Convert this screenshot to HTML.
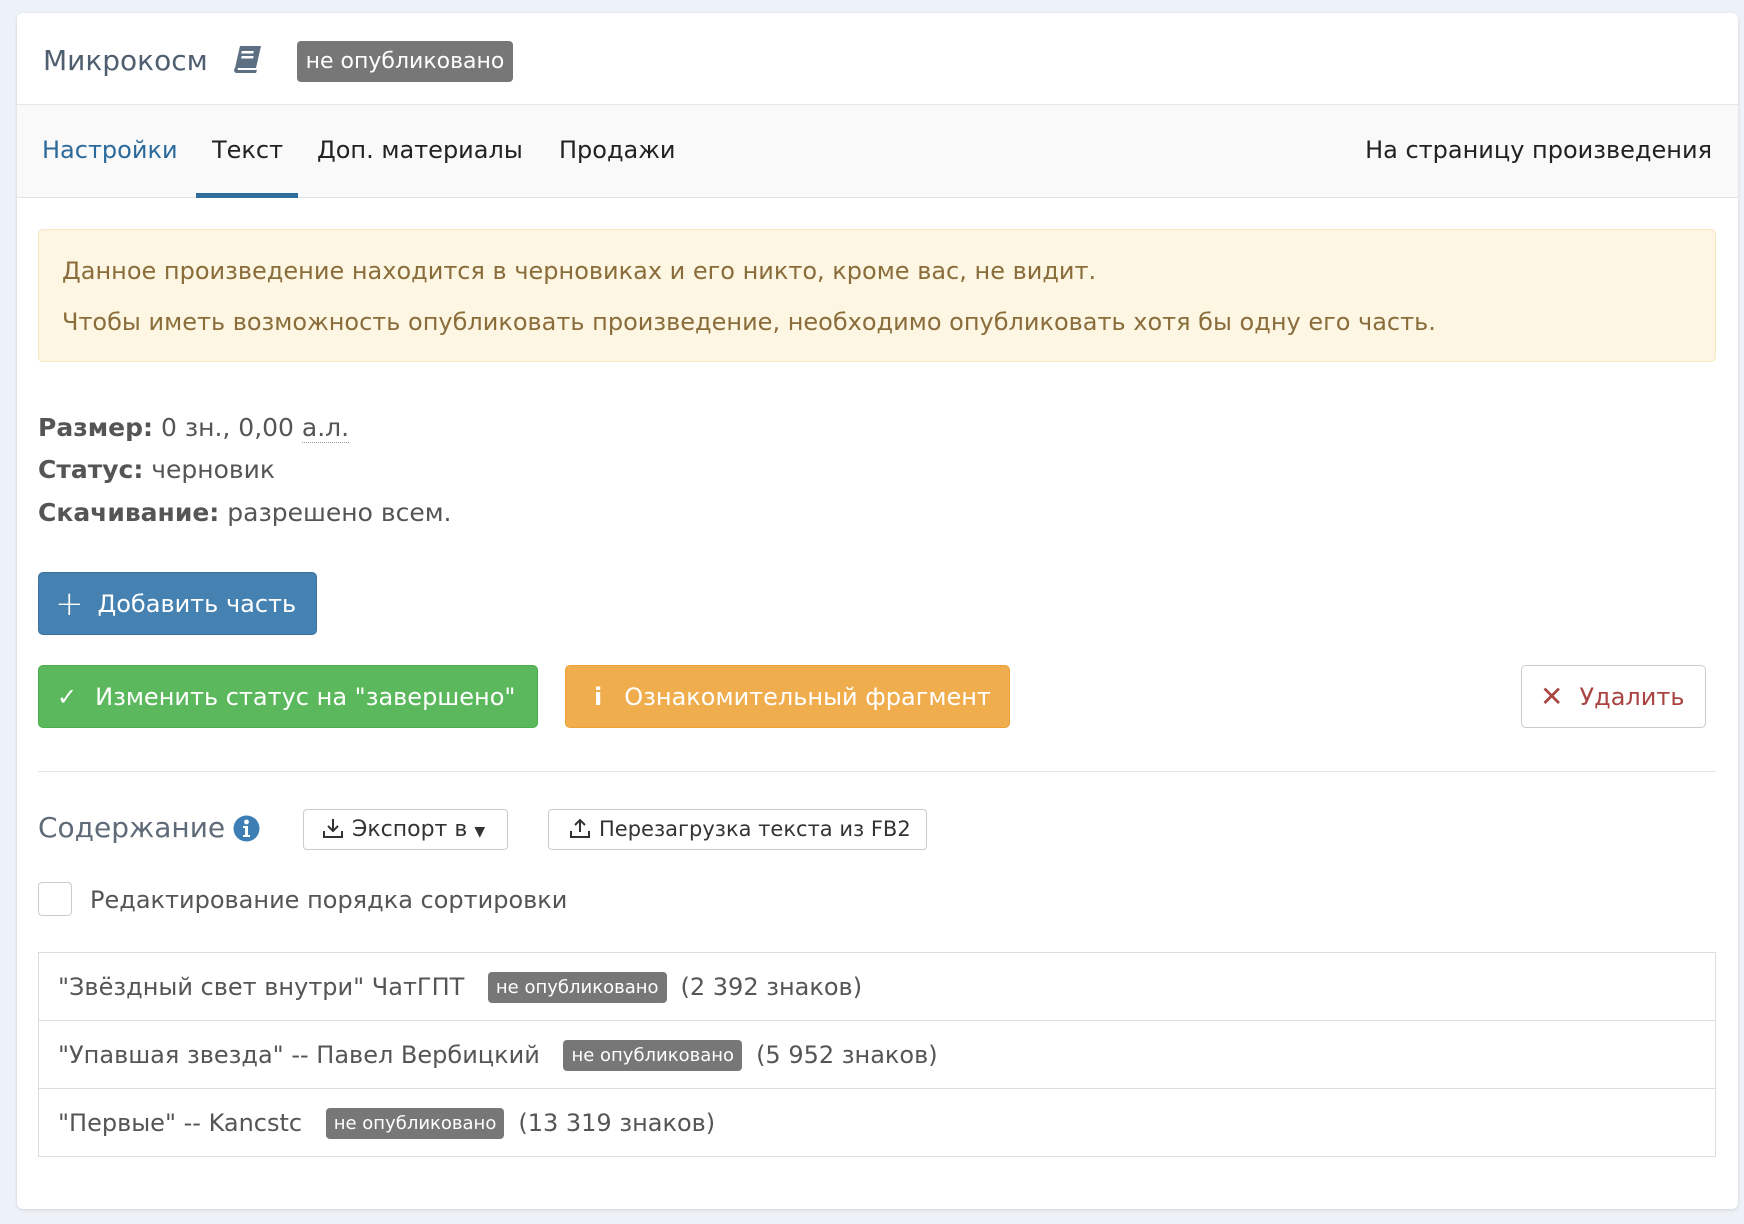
<!DOCTYPE html>
<html><head><meta charset="utf-8"><style>
*{box-sizing:border-box;margin:0;padding:0}
body{width:1744px;height:1224px;background:#edf1f8;font-family:"DejaVu Sans","Liberation Sans",sans-serif;color:#555;position:relative;overflow:hidden}
.card{position:absolute;left:17px;top:13px;width:1721px;height:1196px;background:#fff;border-radius:6px;box-shadow:0 1px 3px rgba(0,0,0,.12)}
.abs{position:absolute;white-space:nowrap}
.badge{background:#777;color:#fff;border-radius:4px;display:inline-block}
.btn{position:absolute;border-radius:5px;color:#fff;font-size:24px;display:flex;align-items:center;white-space:nowrap}
.row{font-size:24px;line-height:36px}
.row .badge{font-size:18px;line-height:31px;padding:0 8px;margin:0 14px 0 16px;vertical-align:2px}
</style></head><body>
<div class="card">
  <div class="abs" style="left:26px;top:28px;font-size:28px;color:#4f5f70;line-height:40px">Микрокосм</div>
  <svg class="abs" style="left:214px;top:32px" width="32" height="30" viewBox="0 0 32 30"><path d="M9 1h21l-5 22H4z" fill="#5d6f82"/><path d="M4 23a3 3 0 0 0 1 5h20l1-3H7a1.5 1.5 0 0 1 0-2" fill="#5d6f82"/><rect x="12" y="6" width="12" height="2.5" fill="#fff" transform="skewX(-12)"/><rect x="13" y="11" width="12" height="2.5" fill="#fff" transform="skewX(-12)"/></svg>
  <div class="abs badge" style="left:280px;top:28px;width:216px;height:41px;font-size:22px;line-height:41px;text-align:center">не опубликовано</div>
  <div class="abs" style="left:0;top:91px;width:1721px;height:94px;background:#f9f9f9;border-top:1px solid #e6e6e6;border-bottom:1px solid #e3e3e3"></div>
  <div class="abs" style="left:25px;top:119px;font-size:24px;color:#2c6a9c;line-height:36px">Настройки</div>
  <div class="abs" style="left:195px;top:119px;font-size:24px;color:#222;line-height:36px">Текст</div>
  <div class="abs" style="left:179px;top:180px;width:102px;height:5px;background:#2f6e9c"></div>
  <div class="abs" style="left:300px;top:119px;font-size:24px;color:#222;line-height:36px">Доп. материалы</div>
  <div class="abs" style="left:542px;top:119px;font-size:24px;color:#222;line-height:36px">Продажи</div>
  <div class="abs" style="right:26px;top:119px;font-size:24px;color:#222;line-height:36px">На страницу произведения</div>

  <div class="abs" style="left:21px;top:216px;width:1678px;height:133px;background:#fcf6e3;border:1px solid #f7e7c2;border-radius:5px"></div>
  <div class="abs" style="left:45px;top:241px;font-size:24px;color:#8a6d3b;line-height:34px">Данное произведение находится в черновиках и его никто, кроме вас, не видит.</div>
  <div class="abs" style="left:45px;top:292px;font-size:24px;color:#8a6d3b;line-height:34px">Чтобы иметь возможность опубликовать произведение, необходимо опубликовать хотя бы одну его часть.</div>

  <div class="abs" style="left:21px;top:398px;font-size:25px;line-height:34px"><b>Размер:</b> 0 зн., 0,00 <span style="border-bottom:1px dotted #999">а.л.</span></div>
  <div class="abs" style="left:21px;top:440px;font-size:25px;line-height:34px"><b>Статус:</b> черновик</div>
  <div class="abs" style="left:21px;top:483px;font-size:25px;line-height:34px"><b>Скачивание:</b> разрешено всем.</div>

  <div class="btn" style="left:21px;top:559px;width:279px;height:63px;background:#4581b1;border:1px solid #3b72a0;padding-left:16px"><span style="font-size:34px;font-weight:300;margin-right:14px">+</span>Добавить часть</div>
  <div class="btn" style="left:21px;top:652px;width:500px;height:63px;background:#5cb85c;border:1px solid #4cae4c;padding-left:18px"><span style="margin-right:18px">✓</span>Изменить статус на "завершено"</div>
  <div class="btn" style="left:548px;top:652px;width:445px;height:63px;background:#f0ad4e;border:1px solid #eea236;padding-left:28px"><b style="margin-right:22px">i</b>Ознакомительный фрагмент</div>
  <div class="btn" style="left:1504px;top:652px;width:185px;height:63px;background:#fff;border:1px solid #ccc;color:#a94442;padding-left:18px"><span style="margin-right:16px;font-size:28px">✕</span>Удалить</div>

  <div class="abs" style="left:21px;top:758px;width:1678px;height:1px;background:#e5e5e5"></div>
  <div class="abs" style="left:21px;top:794px;font-size:28px;color:#5f6b78;line-height:42px">Содержание</div>
  <svg class="abs" style="left:216px;top:802px" width="27" height="27" viewBox="0 0 27 27"><circle cx="13.5" cy="13.5" r="13" fill="#3d7fb5"/><circle cx="13.5" cy="7" r="2.4" fill="#fff"/><path d="M10 11h5v9h2v2h-7v-2h2v-7h-2z" fill="#fff"/></svg>
  <div class="abs" style="left:286px;top:796px;width:205px;height:41px;border:1px solid #ccc;border-radius:4px;font-size:22px;line-height:39px;color:#333;padding-left:18px"><svg width="22" height="22" viewBox="0 0 22 22" style="vertical-align:-3px;margin-right:8px"><path d="M11 2v12M6 9l5 5 5-5M2 14v6h18v-6" stroke="#333" stroke-width="2" fill="none"/></svg>Экспорт в <span style="font-size:14px">▼</span></div>
  <div class="abs" style="left:531px;top:796px;width:379px;height:41px;border:1px solid #ccc;border-radius:4px;font-size:21px;line-height:39px;color:#333;padding-left:20px"><svg width="22" height="22" viewBox="0 0 22 22" style="vertical-align:-3px;margin-right:8px"><path d="M11 15V3M6 8l5-5 5 5M2 14v6h18v-6" stroke="#333" stroke-width="2" fill="none"/></svg>Перезагрузка текста из FB2</div>

  <div class="abs" style="left:21px;top:869px;width:34px;height:34px;border:1px solid #ccc;border-radius:4px"></div>
  <div class="abs" style="left:73px;top:869px;font-size:24px;line-height:36px">Редактирование порядка сортировки</div>

  <div class="abs" style="left:21px;top:939px;width:1678px;height:205px;border:1px solid #ddd"></div>
  <div class="abs" style="left:21px;top:1007px;width:1678px;height:1px;background:#ddd"></div>
  <div class="abs" style="left:21px;top:1075px;width:1678px;height:1px;background:#ddd"></div>
  <div class="abs row" style="left:41px;top:956px">"Звёздный свет внутри" ЧатГПТ <span class="badge">не опубликовано</span>(2 392 знаков)</div>
  <div class="abs row" style="left:41px;top:1024px">"Упавшая звезда" -- Павел Вербицкий <span class="badge">не опубликовано</span>(5 952 знаков)</div>
  <div class="abs row" style="left:41px;top:1092px">"Первые" -- Kancstc <span class="badge">не опубликовано</span>(13 319 знаков)</div>
</div>
</body></html>
